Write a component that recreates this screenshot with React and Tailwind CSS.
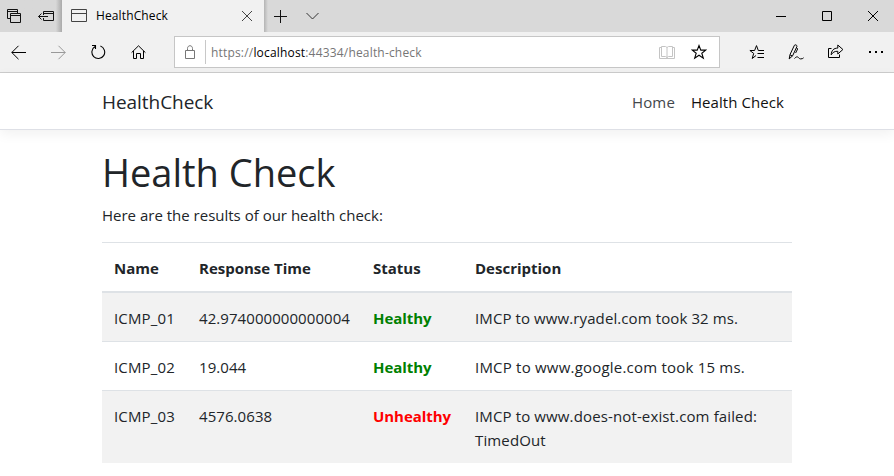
function Icon({ w = 16, h = 16, className = "", sw = 1, children }) {
  return (
    <svg width={w} height={h} viewBox={`0 0 ${w} ${h}`} fill="none" stroke="currentColor" strokeWidth={sw} className={`block shrink-0 ${className}`}>
      {children}
    </svg>
  );
}

function TabStrip() {
  return (
    <div className="flex h-8 items-center bg-[#d9d9d9] text-[#111]">
      <div className="flex h-full w-[62px] shrink-0 items-center bg-linear-to-r from-[#d8d8d8] from-90% to-[#aaaaaa] pl-1.5">
        <Icon>
          <path d="M4.5 10.5H1.5V1.5H11.5V5.5M1.5 3.5H11.5M4.5 5.5H14.5V14.5H4.5ZM4.5 7.5H14.5" />
        </Icon>
        <Icon w={17} className="ml-[15px]">
          <path d="M6.5 7V3.5H16.5V12.5H6.5V10M6.5 5.5H16.5M1.5 8.5H11M4.5 5.5L1.5 8.5L4.5 11.5" />
        </Icon>
      </div>
      <div className="flex h-full w-[202px] shrink-0 items-center bg-[#f1f1f1] pl-[9px] pr-[11px]">
        <Icon className="text-[#444]">
          <path d="M.5 1.5H15.5V13.5H.5ZM.5 5.5H15.5" />
        </Icon>
        <span className="ml-[9px] text-xs tracking-[0.12px] text-black">HealthCheck</span>
        <Icon w={12} h={12} className="ml-auto text-[#444]">
          <path d="M1 1L11 11M11 1L1 11" />
        </Icon>
      </div>
      <div className="h-full w-1 bg-linear-to-r from-[#b4b4b4] to-[#d9d9d9]" />
      <Icon w={14} h={14} className="ml-1.5">
        <path d="M6.5 1V14M0 7.5H13" />
      </Icon>
      <Icon w={14} h={14} className="ml-[18px] text-[#333]">
        <path d="M.5 4L6.5 10L12.5 4" />
      </Icon>
      <div className="ml-auto flex items-center gap-9 pr-4 text-black">
        <Icon w={10} h={10}>
          <path d="M0 5.5H10" />
        </Icon>
        <Icon w={10} h={10}>
          <path d="M.5 .5H9.5V9.5H.5Z" />
        </Icon>
        <Icon w={10} h={10}>
          <path d="M0 0L10 10M10 0L0 10" />
        </Icon>
      </div>
    </div>
  );
}

function AddressBar() {
  return (
    <div className="ml-[27px] flex h-8 w-[546px] shrink-0 items-center border border-[#c6c6c6] bg-white pl-2.5 pr-3">
      <Icon w={11} h={14} className="text-[#777]">
        <path d="M.5 5.5H9.5V13.5H.5ZM2.5 5.5V3.5C2.5 -.2 7.5 -.2 7.5 3.5V5.5" />
      </Icon>
      <div className="ml-[9px] h-6 w-px bg-[#c8c8c8]" />
      <div className="ml-[5px] pt-0.5 text-xs tracking-[0.18px] whitespace-nowrap text-[#767676]">
        https://<span className="text-black">localhost</span>:44334/health-check
      </div>
      <Icon className="ml-auto text-[#c4c4c4]">
        <path d="M2.5 3.5H.5V14.5H15.5V3.5H13.5M2.5 2.5H6.5L8 3.5L9.5 2.5H13.5V12.5H9.5L8 13.5L6.5 12.5H2.5ZM8 3.5V14.5" />
      </Icon>
      <Icon className="ml-4 text-black" sw={1.1}>
        <path d="M8 1.5L9.8 6.1H14.8L10.8 9.2L12.3 14.2L8 11.2L3.7 14.2L5.2 9.2L1.2 6.1H6.2Z" />
      </Icon>
    </div>
  );
}

function Toolbar() {
  return (
    <div className="flex h-[41px] items-center border-b border-[#cccccc] bg-[#f1f1f1] pl-[11px] text-black">
      <Icon>
        <path d="M.8 8.5H15M7.5 1.8L.8 8.5L7.5 15.2" />
      </Icon>
      <Icon className="ml-6 text-[#999]">
        <path d="M0 8.5H14.2M7.5 1.8L14.2 8.5L7.5 15.2" />
      </Icon>
      <Icon className="ml-6" sw={1.1}>
        <path d="M4.1 2.6A6.4 6.4 0 1 0 9.4 2.1M1 1.5H4.5V5" />
      </Icon>
      <Icon className="ml-6">
        <path d="M.6 8.6L7.5 1.8L14.4 8.6M2.5 7V14.5H5.5V9.5H9.5V14.5H12.5V7" />
      </Icon>
      <AddressBar />
      <Icon className="ml-[29px]">
        <path d="M15 6.5H9.3L7.5 1.6L5.6 6.5H.9L4.7 9.4L3.2 14.5L7 11.5M8.5 9.5H15M8.5 13.5H15" />
      </Icon>
      <Icon className="ml-[23px]">
        <path d="M1.2 14.9L2 10.6L6.4 1.3C7.2 .3 9.3 1 8.9 2.6L4.6 11.8L1.2 14.9M8.5 3.5L9.6 5L7.6 9M2 10.8L4.4 12M6.5 14.5C8.2 12.6 9.4 12.4 10.5 13.6C11.4 14.6 11.8 14.9 12.8 14.9C14 14.9 14.8 14.6 15.6 13.8" />
      </Icon>
      <Icon className="ml-6">
        <path d="M3.5 4.5H.5V13.5H11.5V10.5M3.2 10.8C3.4 6.5 5.6 4.1 9.8 4.1V1L14.9 5.5L9.8 10V7.3C6.8 7.1 4.8 8.2 3.2 10.8Z" />
      </Icon>
      <Icon className="ml-6">
        <g fill="currentColor" stroke="none">
          <rect x="1" y="7" width="2" height="2" />
          <rect x="7" y="7" width="2" height="2" />
          <rect x="13" y="7" width="2" height="2" />
        </g>
      </Icon>
    </div>
  );
}

const checks = [
  { name: "ICMP_01", time: "42.974000000000004", status: "Healthy", description: "IMCP to www.ryadel.com took 32 ms.", tracking: "tracking-[0.1px]" },
  { name: "ICMP_02", time: "19.044", status: "Healthy", description: "IMCP to www.google.com took 15 ms.", tracking: "tracking-[0.21px]" },
  { name: "ICMP_03", time: "4576.0638", status: "Unhealthy", description: "IMCP to www.does-not-exist.com failed: TimedOut", tracking: "tracking-[0.13px]" },
];

function ResultsTable() {
  return (
    <table className="w-[690px] table-fixed border-separate border-spacing-0 text-left">
      <colgroup>
        <col className="w-[85px]" />
        <col className="w-[174px]" />
        <col className="w-[102px]" />
        <col className="w-[329px]" />
      </colgroup>
      <thead>
        <tr>
          {["Name", "Response Time", "Status", "Description"].map((label) => (
            <th key={label} className="border-t border-b-2 border-[#dee2e6] px-3 pt-[13px] pb-[11px] font-bold">
              {label}
            </th>
          ))}
        </tr>
      </thead>
      <tbody>
        {checks.map((c, i) => {
          const cell = `px-3 pt-[13px] pb-[11px] align-top ${i > 0 ? "border-t border-[#dee2e6]" : ""} ${i % 2 === 0 ? "bg-[#f2f2f2]" : ""}`;
          return (
            <tr key={c.name}>
              <td className={`${cell} tracking-[0.15px]`}>{c.name}</td>
              <td className={`${cell} tracking-[0.07px]`}>{c.time}</td>
              <td className={`${cell} tracking-[-0.05px] font-bold ${c.status === "Healthy" ? "text-[#008000]" : "text-[#ff0000]"}`}>{c.status}</td>
              <td className={`${cell} ${c.tracking}`}>{c.description}</td>
            </tr>
          );
        })}
      </tbody>
    </table>
  );
}

export default function App() {
  return (
    <div className="h-[476px] w-[894px] overflow-hidden bg-white font-['Open_Sans','Noto_Sans',sans-serif] font-[370]">
      <TabStrip />
      <Toolbar />
      <nav className="flex h-[57px] items-center border-b border-[#dee0e6] bg-white pt-0.5 pr-[110px] pl-[102px] shadow-[0_4px_12px_rgba(0,0,0,0.06)]">
        <span className="text-[19px] tracking-[-0.05px] text-[#212529]">HealthCheck</span>
        <div className="ml-auto flex gap-4 text-[15px] text-[#212529]">
          <span className="tracking-[0.15px] text-[#43474b]">Home</span>
          <span className="tracking-[0.07px] text-[#111]">Health Check</span>
        </div>
      </nav>
      <main className="px-[102px] pt-[18px] text-[15px] leading-6 text-[#212529]">
        <h1 className="mb-[7px] text-[38px] leading-12 font-[370]">Health Check</h1>
        <p className="mb-[15px]">Here are the results of our health check:</p>
        <ResultsTable />
      </main>
    </div>
  );
}
